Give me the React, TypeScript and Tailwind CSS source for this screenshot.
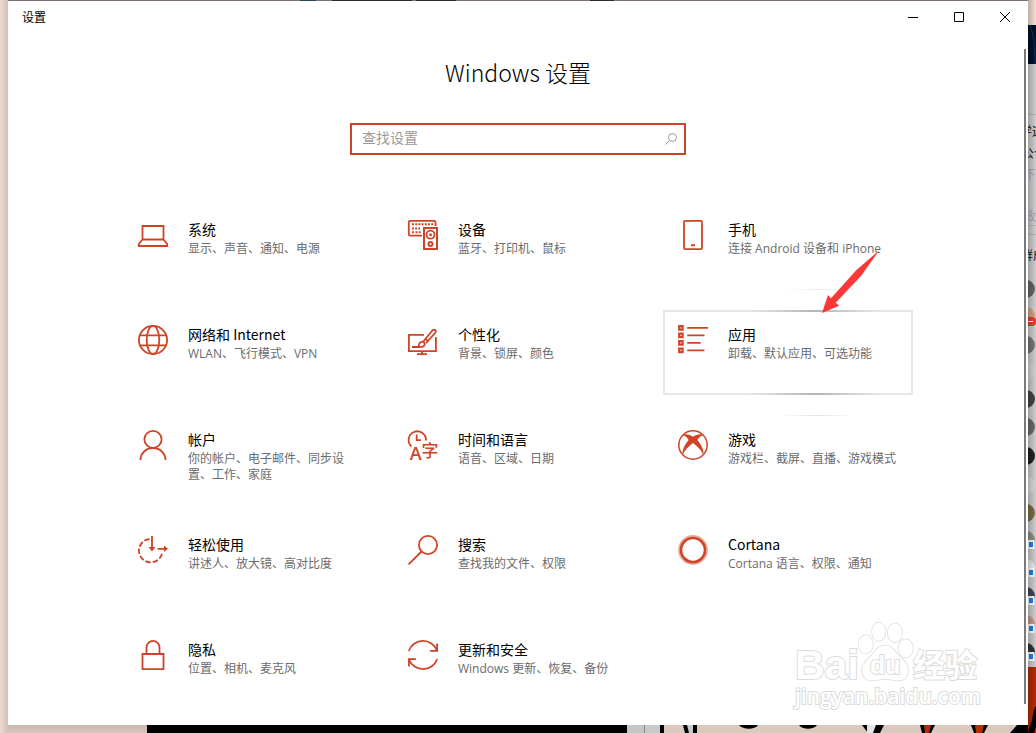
import type { ReactNode } from "react";

type Category = {
  title: string;
  description: string;
  icon: ReactNode;
  active?: boolean;
};

const categories: Category[] = [
  {
    title: "系统",
    description: "显示、声音、通知、电源",
    icon: <path d="M4.5 6h21v13.5h-21zM4.5 19.5.8 24v2h28.4v-2l-3.7-4.5" />,
  },
  {
    title: "设备",
    description: "蓝牙、打印机、鼠标",
    icon: (
      <>
        <path d="M14 15.7H2a1.2 1.2 0 0 1-1.2-1.2V2A1.2 1.2 0 0 1 2 .8h24.5A1.2 1.2 0 0 1 27.5 2v4" />
        <path
          d="M4 4.3h22M4 8.5h8M4 12.3h2M7.5 12.3H13"
          strokeWidth="2"
          strokeDasharray="2 1.2"
        />
        <path d="M16 8h13v21H16z" strokeWidth="2" />
        <circle cx="22.5" cy="14.7" r="4" />
        <circle cx="22.5" cy="14.7" r=".6" />
        <circle cx="22.5" cy="24" r="2" strokeWidth="2" />
      </>
    ),
  },
  {
    title: "手机",
    description: "连接 Android 设备和 iPhone",
    icon: (
      <>
        <rect x="6" y=".9" width="18" height="28.2" rx="1.2" />
        <path d="M13 25.2h4" strokeWidth="2" />
      </>
    ),
  },
  {
    title: "网络和 Internet",
    description: "WLAN、飞行模式、VPN",
    icon: (
      <>
        <circle cx="15" cy="15" r="14.1" />
        <ellipse cx="15" cy="15" rx="6.3" ry="14.1" />
        <path d="M1.5 10.3h27M1.5 20.3h27" />
      </>
    ),
  },
  {
    title: "个性化",
    description: "背景、锁屏、颜色",
    icon: (
      <>
        <path d="M16 9.8H.9v16.4h27V12M14 26.2v3M9 29.2h10M4 22h8" />
        <path d="M12 21.8c-1.500.2-1.800-1-1-2.500.8-2 3-3.500 5-2 1.600 1.500.5 4-1.500 4.500-1 .3-1.500.1-2.500 0zM15.300 16.500l9-11c2-2 4.500 0 3 2.300L18 18.200M17.500 13.800l3 2.800" />
      </>
    ),
  },
  {
    title: "应用",
    description: "卸载、默认应用、可选功能",
    active: true,
    icon: (
      <>
        <path
          d="M1.2 1.2h3.4v3.4H1.2zM1.2 8.7h3.4v3.4H1.2zM1.2 16.2h3.4v3.4H1.2zM1.2 23.7h3.4v3.4H1.2z"
          strokeWidth="2.2"
        />
        <path d="M9.2 2.9H30M9.2 10.4h17.3M9.2 17.9h13.5M9.2 25.4h17.3" />
      </>
    ),
  },
  {
    title: "帐户",
    description: "你的帐户、电子邮件、同步设置、工作、家庭",
    icon: (
      <>
        <circle cx="15" cy="9.4" r="8.6" />
        <path d="M2.500 30a12.500 12 0 0 1 25 0" />
      </>
    ),
  },
  {
    title: "时间和语言",
    description: "语音、区域、日期",
    icon: (
      <>
        <path d="M3.5 16.5A8.7 8.7 0 1 1 18 10.5M8.7 4.5v5.700H13" />
        <text
          x="1.800"
          y="30"
          fontSize="18"
          fontWeight="600"
          fill="currentColor"
          stroke="none"
          className="font-['Open_Sans',sans-serif]"
        >
          A
        </text>
        <text x="13.500" y="27" fontSize="17" fontWeight="500" fill="currentColor" stroke="none">
          字
        </text>
      </>
    ),
  },
  {
    title: "游戏",
    description: "游戏栏、截屏、直播、游戏模式",
    icon: (
      <>
        <circle cx="15" cy="15" r="14.2" strokeWidth="1.500" />
        <path
          d="M6 4.300c3-.6 6.500.7 9 2.500 2.500-1.800 6-3.100 9-2.500l.8 1.200c-2.300.4-4 2.300-5.500 4.500 4 4.500 6.700 10 6.200 15-2-4.500-6-8.700-10.500-12C10.500 16.300 6.500 20.500 4.500 25 4 20 6.700 14.500 10.700 10 9.200 7.800 7.500 5.900 5.200 5.500z"
          fill="currentColor"
          stroke="none"
        />
      </>
    ),
  },
  {
    title: "轻松使用",
    description: "讲述人、放大镜、高对比度",
    icon: (
      <>
        <path d="M11.5 4A11.7 11.7 0 1 0 24.3 17" strokeDasharray="5.5 2" />
        <path d="M14 1v13M19.5 13.8H28" />
        <path d="M10.5 12h7L14 16.5zM26 10.5v6.600l4-3.300z" fill="currentColor" stroke="none" />
      </>
    ),
  },
  {
    title: "搜索",
    description: "查找我的文件、权限",
    icon: (
      <>
        <circle cx="20" cy="10" r="9.1" />
        <path d="M13.5 16.5.6 29.4" />
      </>
    ),
  },
  {
    title: "Cortana",
    description: "Cortana 语言、权限、通知",
    icon: (
      <>
        <circle cx="15" cy="15" r="14" strokeOpacity=".45" />
        <circle cx="15" cy="15" r="12" strokeWidth="2.600" />
      </>
    ),
  },
  {
    title: "隐私",
    description: "位置、相机、麦克风",
    icon: (
      <path d="M4.5 14h21v15.1h-21zM8.5 14V7.4a6.5 6.5 0 0 1 13 0V14" />
    ),
  },
  {
    title: "更新和安全",
    description: "Windows 更新、恢复、备份",
    icon: (
      <>
        <path d="M.8 11A15 15 0 0 1 29 10.5M29.2 19A15 15 0 0 1 1 19.5" />
        <path d="M29.1 3.5v7.3h-7M.9 26.5v-7.3h7" />
      </>
    ),
  },
];

function SearchIcon() {
  return (
    <svg viewBox="0 0 12 12" className="size-3 shrink-0" fill="none" stroke="currentColor">
      <circle cx="7.5" cy="4.5" r="4" />
      <path d="M4.5 7.5.4 11.6" />
    </svg>
  );
}

function PointerArrow() {
  return (
    <svg
      viewBox="0 0 62 68"
      className="pointer-events-none absolute -top-16 left-[155px] z-10 h-[68px] w-[62px] max-w-none"
      fill="#fb3737"
    >
      <path d="M2 65 8 47l3 3.200L36 22.500 59.500 2 41 28 15.700 54.800l3.500 3z" />
    </svg>
  );
}

function RevealLines() {
  return (
    <>
      <span className="absolute -top-[23px] left-[115px] h-px w-[90px] bg-linear-to-r from-transparent via-[#ebebeb] to-transparent" />
      <span className="absolute -top-0.5 left-[85px] h-0.5 w-[130px] bg-linear-to-r from-transparent via-[#b4b4b4] to-transparent" />
      <span className="absolute -bottom-0.5 left-[85px] h-0.5 w-[130px] bg-linear-to-r from-transparent via-[#b4b4b4] to-transparent" />
      <span className="absolute -bottom-[23px] left-[115px] h-px w-[75px] bg-linear-to-r from-transparent via-[#e2e2e2] to-transparent" />
    </>
  );
}

function CategoryTile({ title, description, icon, active }: Category) {
  return (
    <button
      type="button"
      className={`relative flex min-h-[85px] items-start gap-5 border-2 p-[13px] text-left ${
        active ? "border-[#e6e6e6]" : "border-transparent"
      }`}
    >
      <svg
        viewBox="0 0 30 30"
        className="size-[30px] shrink-0 overflow-visible text-[#cf4427]"
        fill="none"
        stroke="currentColor"
        strokeWidth="1.8"
      >
        {icon}
      </svg>
      <span className="flex min-w-0 flex-1 flex-col gap-[3px]">
        <span className="text-sm leading-[18px] text-black">{title}</span>
        <span className="font-['Open_Sans','Noto_Sans_CJK_SC',sans-serif] text-xs leading-4 text-[#6b6b6b]">
          {description}
        </span>
      </span>
      {active && (
        <>
          <RevealLines />
          <PointerArrow />
        </>
      )}
    </button>
  );
}

function TitleBar() {
  const button = "flex h-8 w-[46px] items-center justify-center";
  return (
    <header className="flex h-8 items-center justify-between pl-3.5 text-black">
      <span className="text-xs">设置</span>
      <div className="flex">
        <button type="button" aria-label="最小化" className={button}>
          <svg viewBox="0 0 10 10" className="size-2.5" stroke="currentColor">
            <path d="M0 5.5h10" />
          </svg>
        </button>
        <button type="button" aria-label="最大化" className={button}>
          <svg viewBox="0 0 10 10" className="size-2.5" fill="none" stroke="currentColor">
            <path d="M.5.5h9v9h-9z" />
          </svg>
        </button>
        <button type="button" aria-label="关闭" className={button}>
          <svg viewBox="0 0 10 10" className="size-2.5" stroke="currentColor">
            <path d="m0 0 10 10M10 0 0 10" />
          </svg>
        </button>
      </div>
    </header>
  );
}

function Watermark() {
  return (
    <svg
      viewBox="0 0 200 96"
      className="pointer-events-none absolute right-[38px] bottom-[11px] h-24 w-[200px]"
      fill="#fff"
      stroke="#dcdcdc"
      strokeWidth="2"
      paintOrder="stroke"
    >
      <text
        x="5"
        y="61"
        fontSize="41"
        fontWeight="700"
        className="font-['Liberation_Sans',sans-serif]"
      >
        Bai
      </text>
      <g strokeWidth="1.500">
        <ellipse cx="75.7" cy="26.3" rx="7.3" ry="9" />
        <ellipse cx="88.7" cy="13.7" rx="6.7" ry="9.3" />
        <ellipse cx="105" cy="14.7" rx="7.3" ry="9.3" />
        <ellipse cx="115.7" cy="30.3" rx="7.3" ry="9" />
        <path d="M95 27.500c6 0 9 4 12.500 9 4 5 10.500 8 10.500 16 0 6-4 10-9.500 10-5 0-8-1.500-13.500-1.500s-8.500 1.500-13.500 1.500c-5.500 0-9.500-4-9.500-10 0-8 6.500-11 10.500-16 3.500-5 6.500-9 12.500-9z" />
      </g>
      <text
        x="80"
        y="56"
        fontSize="25"
        fontWeight="700"
        className="font-['Liberation_Sans',sans-serif]"
      >
        du
      </text>
      <text x="123" y="59" fontSize="32" fontWeight="700">
        经验
      </text>
      <text
        x="5"
        y="86"
        fontSize="21"
        fontWeight="600"
        className="font-['Open_Sans',sans-serif]"
      >
        jingyan.baidu.com
      </text>
    </svg>
  );
}

const avatars = [
  { y: 289, fill: "#666" },
  { y: 316, fill: "#d3a582" },
  { y: 345, fill: "#777" },
  { y: 371, fill: "#d4d4d4" },
  { y: 399, fill: "#444" },
  { y: 427, fill: "#6b6b6b" },
  { y: 456, fill: "#222" },
  { y: 485, fill: "#dadada" },
  { y: 513, fill: "#7b6c43" },
  { y: 540, fill: "#8c9080" },
  { y: 568, fill: "#ececec" },
  { y: 596, fill: "#4a4458" },
  { y: 624, fill: "#c9998a" },
  { y: 652, fill: "#333" },
];

// chat list that peeks out on the right of the window
function DesktopRight() {
  return (
    <svg viewBox="0 0 8 733" className="h-[733px] w-2 shrink-0" aria-hidden="true">
      <defs>
        <linearGradient id="edge">
          <stop offset="0" stopColor="#000" stopOpacity=".22" />
          <stop offset="1" stopColor="#000" stopOpacity="0" />
        </linearGradient>
      </defs>
      <path d="M0 0h8v25H0z" fill="#f3dfd5" />
      <path d="M0 25h8v39H0z" fill="#021128" />
      <path d="M2 25c4 12 5 20 5 39" fill="none" stroke="#0c3b66" />
      <path d="M0 64h8v603H0z" fill="#cdcdd0" />
      <path d="M0 114.5h8M0 225.5h8M0 234.5h8" stroke="#b5b5b5" />
      <g fontSize="12" fill="#111">
        <text x="-8" y="136">学迎</text>
        <text x="-6" y="158">公个</text>
        <text x="-4" y="179" fill="#aaa">下载</text>
        <text x="-4" y="221" fill="#aaa">政</text>
        <text x="-7" y="260">群成</text>
      </g>
      {avatars.map(({ y, fill }) => (
        <circle key={y} cx="-2" cy={y} r="9" fill={fill} />
      ))}
      <path d="M0 317h4a4 4 0 0 1 0 9H0z" fill="#e5402c" />
      <path d="M0 321.5h5" stroke="#fff" />
      {[545, 573, 601, 629, 657].map((y) => (
        <g key={y}>
          <path d={`M0 ${y - 5}h6.500v9H0z`} fill="#fff" />
          <path d={`M1 ${y - 3}h4v5H1z`} fill="#1f86e0" />
        </g>
      ))}
      <path d="M0 667h8v66H0z" fill="#b32d06" />
      <path d="M8 706c-3 4-3 9-4 14s-3 6-4 13h6l2-6z" />
      <path d="M0 0h8v733H0z" fill="url(#edge)" />
    </svg>
  );
}

function DesktopBottom() {
  return (
    <div className="flex min-h-2 flex-1 overflow-hidden" aria-hidden="true">
      <div className="w-[139px] bg-linear-to-b from-[#c9b5ad] to-[#dac6bc]" />
      <div className="w-[480px] bg-black" />
      <div className="w-[18px] border-r border-[#888] bg-[#c6c6c6]" />
      <svg viewBox="0 0 383 8" className="h-2 w-[383px] shrink-0">
        <path d="M0 0h383v8H0z" fill="#dcc9be" />
        <path d="M0 0h15v8H0zM39 0h12v8H39z" fill="#c9c9c9" />
        <path d="M15 0h4v8h-4zM38 0h4l2 8h-4zM48 0h4v8h-4zM94 0h19c-3 5-15 5-19 0zM154 0h18c-3 5-15 5-18 0zM217 0h22l-4 8h-12zM275 0h15l-4 8h-9zM326 0h17l-4 8h-10zM372 0h11v8h-18z" />
        <path d="M222 0h9l-3 8h-6z" fill="#e3e3e3" />
        <path d="M279 0h7l-2 8h-4zM330 0h9l-2 8h-6z" fill="#b32d06" />
      </svg>
    </div>
  );
}

export default function App() {
  return (
    <div className="flex min-h-screen bg-[#eedacf] font-['Noto_Sans_CJK_SC',sans-serif]">
      <div className="w-2 shrink-0 bg-linear-to-r from-[#f0dcd1] to-[#d3c0b7]" />
      <div className="flex min-w-0 flex-1 flex-col">
        <div className="flex h-px gap-1 bg-[#7d706f]">
          <div className="ml-[292px] w-4 bg-[#28405a]" />
          <div className="ml-3 w-20 bg-[#2c2a30]" />
          <div className="w-10 bg-[#2c2a30]" />
          <div className="ml-[130px] w-6 bg-[#2c2a30]" />
        </div>
        <main className="relative bg-white pb-[15px]">
          <TitleBar />
          <h1 className="mt-[25px] text-center text-[23px] leading-[29px] font-light text-black">
            Windows 设置
          </h1>
          <label className="mx-auto mt-9 flex h-8 w-[336px] items-center border-2 border-[#cd4527] pr-[7px] pl-2.5 text-[#999]">
            <input
              type="text"
              aria-label="查找设置"
              placeholder="查找设置"
              className="h-full min-w-0 flex-1 bg-transparent pb-1 text-sm text-black outline-none placeholder:text-[#999]"
            />
            <SearchIcon />
          </label>
          <div className="mt-[50px] grid grid-cols-[repeat(auto-fit,250px)] justify-center gap-5 px-10">
            {categories.map((category) => (
              <CategoryTile key={category.title} {...category} />
            ))}
          </div>
          <Watermark />
          <div className="absolute top-12 right-0.5 bottom-[21px] w-0.5 bg-[#7a7a7a]" />
        </main>
        <DesktopBottom />
      </div>
      <DesktopRight />
    </div>
  );
}
